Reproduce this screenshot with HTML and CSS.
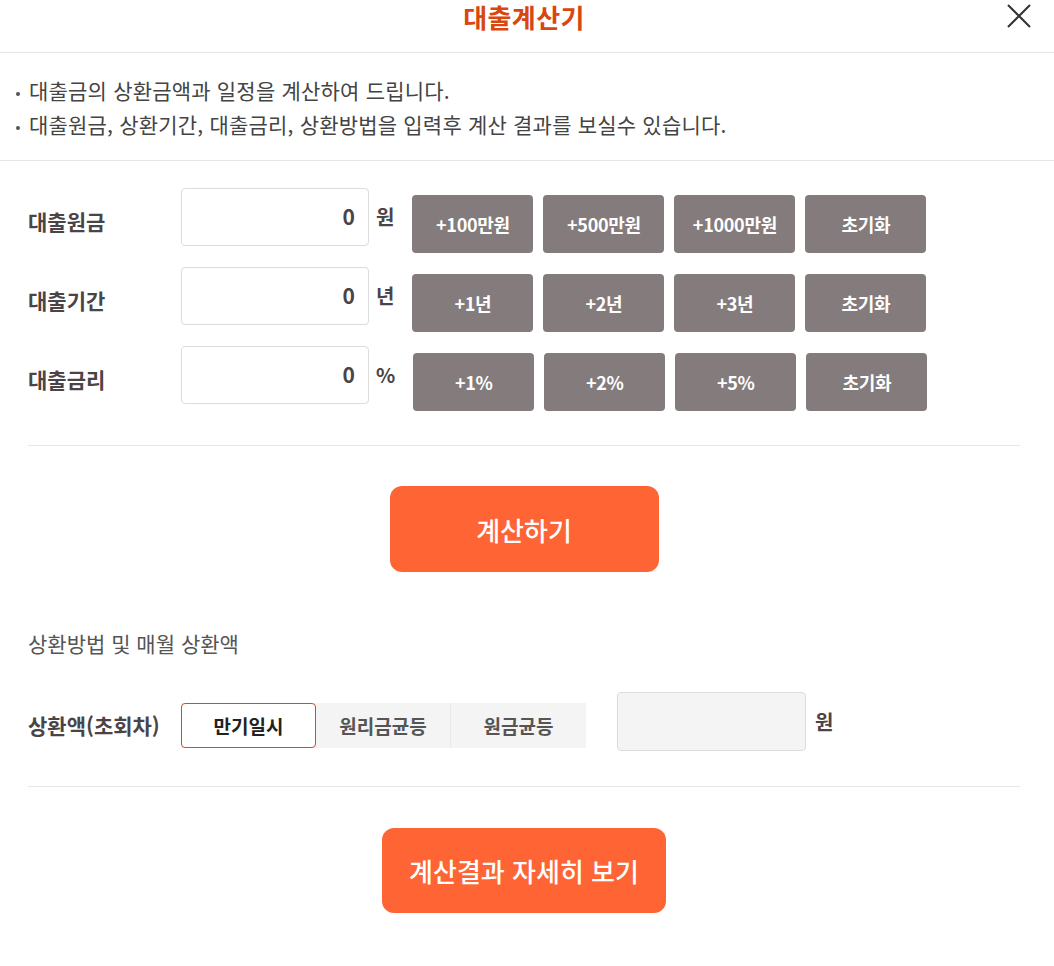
FILE: index.html
```html
<!DOCTYPE html>
<html lang="ko">
<head>
<meta charset="utf-8">
<title>대출계산기</title>
<link rel="stylesheet" href="styles.css">
</head>
<body>
<div class="modal">
  <header class="head">
    <h1 class="title">대출계산기</h1>
    <button class="close" aria-label="닫기">
      <svg width="26" height="26" viewBox="0 0 26 26"><path d="M2 2 L24 24 M24 2 L2 24" stroke="#333" stroke-width="2" fill="none"/></svg>
    </button>
  </header>
  <ul class="notes">
    <li>대출금의 상환금액과 일정을 계산하여 드립니다.</li>
    <li>대출원금, 상환기간, 대출금리, 상환방법을 입력후 계산 결과를 보실수 있습니다.</li>
  </ul>
  <section class="form">
    <div class="row">
      <span class="label">대출원금</span>
      <div class="field">0</div>
      <span class="unit">원</span>
      <div class="btns">
        <button class="gbtn">+100만원</button>
        <button class="gbtn">+500만원</button>
        <button class="gbtn">+1000만원</button>
        <button class="gbtn">초기화</button>
      </div>
    </div>
    <div class="row">
      <span class="label">대출기간</span>
      <div class="field">0</div>
      <span class="unit">년</span>
      <div class="btns">
        <button class="gbtn">+1년</button>
        <button class="gbtn">+2년</button>
        <button class="gbtn">+3년</button>
        <button class="gbtn">초기화</button>
      </div>
    </div>
    <div class="row">
      <span class="label">대출금리</span>
      <div class="field">0</div>
      <span class="unit">%</span>
      <div class="btns">
        <button class="gbtn">+1%</button>
        <button class="gbtn">+2%</button>
        <button class="gbtn">+5%</button>
        <button class="gbtn">초기화</button>
      </div>
    </div>
    <hr class="sep sep-a">
    <div class="center">
      <button class="obtn obtn-calc">계산하기</button>
    </div>
    <h2 class="sub">상환방법 및 매월 상환액</h2>
    <div class="repay">
      <span class="label label-repay">상환액(초회차)</span>
      <div class="tabs">
        <button class="tab active">만기일시</button>
        <button class="tab">원리금균등</button>
        <button class="tab">원금균등</button>
      </div>
      <div class="result"></div>
      <span class="unit unit-result">원</span>
    </div>
    <hr class="sep sep-b">
    <div class="center">
      <button class="obtn obtn-detail">계산결과 자세히 보기</button>
    </div>
  </section>
</div>
</body>
</html>
```
FILE: styles.css
```css
* { box-sizing: border-box; }
html, body { margin: 0; padding: 0; background: #fff; }
body {
  font-family: "Noto Sans CJK KR", "Noto Sans", sans-serif;
  color: #444;
}
button { font-family: inherit; cursor: pointer; }

.modal { width: 1054px; }

.head {
  position: relative;
  height: 53px;
  border-bottom: 1px solid #e6e6e6;
  padding: 0 34px 0 28px;
  display: flex;
  justify-content: center;
}
.title {
  margin: 0;
  font-size: 26px;
  line-height: 34px;
  font-weight: 700;
  color: #d9470f;
  letter-spacing: 0.4px;
}
.close {
  position: absolute;
  top: 3px;
  right: 22px;
  width: 26px;
  height: 26px;
  padding: 0;
  border: 0;
  background: none;
}
.close svg { display: block; }

.notes {
  list-style: none;
  margin: 0;
  padding: 20px 0 19px 29px;
  border-bottom: 1px solid #e6e6e6;
}
.notes li {
  position: relative;
  font-size: 21px;
  line-height: 34px;
  color: #444;
  letter-spacing: 0.2px;
}
.notes li::before {
  content: "";
  position: absolute;
  left: -13px;
  top: 19px;
  width: 4px;
  height: 4px;
  border-radius: 50%;
  background: #555;
}

.form { padding: 27px 34px 0 28px; }

.row {
  display: flex;
  align-items: flex-start;
  height: 65px;
  margin-bottom: 14px;
}
.row:nth-of-type(3) { margin-bottom: 0; }

.label {
  width: 153px;
  flex: none;
  padding-top: 4px;
  line-height: 58px;
  font-size: 21px;
  font-weight: 700;
  color: #4b4446;
}
.field {
  width: 188px;
  height: 58px;
  flex: none;
  border: 1px solid #dcdcdc;
  border-radius: 4px;
  text-align: right;
  padding-right: 13px;
  line-height: 55px;
  font-size: 21px;
  font-weight: 700;
  color: #4b4446;
}
.unit {
  line-height: 58px;
  font-size: 20px;
  font-weight: 700;
  color: #4b4446;
  margin: 0 18px 0 7px;
}
.btns {
  display: flex;
  gap: 10px;
  margin-top: 7px;
}
.gbtn {
  width: 121px;
  height: 58px;
  border: 0;
  border-radius: 4px;
  background: #837b7c;
  color: #fff;
  font-size: 18px;
  font-weight: 700;
  letter-spacing: -0.3px;
  padding: 0;
}

.sep {
  border: 0;
  border-top: 1px solid #e6e6e6;
  margin: 0;
}
.sep-a { margin-top: 34px; }
.sep-b { margin-top: 35px; }

.center { display: flex; justify-content: center; }

.obtn {
  border: 0;
  border-radius: 12px;
  background: #ff6434;
  color: #fff;
  font-weight: 500;
  padding: 0;
}
.obtn-calc {
  margin-top: 40px;
  width: 269px;
  height: 86px;
  font-size: 26px;
}
.obtn-detail {
  margin-top: 41px;
  width: 284px;
  height: 85px;
  font-size: 26px;
}

.sub {
  margin: 57px 0 0;
  font-size: 21px;
  line-height: 28px;
  font-weight: 400;
  color: #555;
}

.repay {
  display: flex;
  align-items: center;
  height: 59px;
  margin-top: 35px;
}
.label-repay {
  padding-top: 0;
  line-height: 28px;
  margin-top: 7px;
}
.tabs {
  display: flex;
  margin-top: 8px;
  background: #f4f4f4;
}
.tab {
  width: 135px;
  height: 45px;
  padding: 0;
  border: 0;
  border-right: 1px solid #e9e9e9;
  background: #f4f4f4;
  font-size: 19px;
  font-weight: 700;
  color: #555;
}
.tab:last-child { border-right: 0; }
.tab.active {
  background: #fff;
  border: 1px solid #c9531f;
  border-radius: 4px;
  color: #222;
}
.result {
  width: 189px;
  height: 59px;
  margin-left: 31px;
  background: #f4f4f4;
  border: 1px solid #dcdcdc;
  border-radius: 4px;
}
.unit-result {
  margin: 0 0 0 9px;
  line-height: 28px;
}
```
